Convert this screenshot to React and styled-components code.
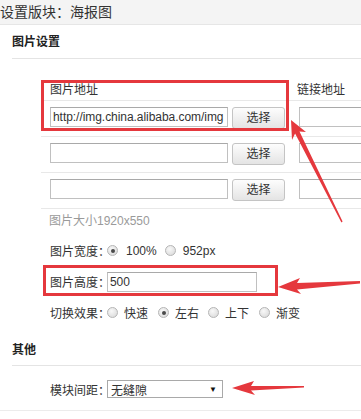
import React from 'react';
import styled, { createGlobalStyle } from 'styled-components';

const GlobalStyle = createGlobalStyle`
  html, body {
    margin: 0;
    padding: 0;
    background: #fff;
  }
  body {
    font-family: "Liberation Sans", "Noto Sans CJK SC", sans-serif;
    font-size: 12px;
    color: #333;
  }
`;

const Page = styled.div`
  position: relative;
  width: 361px;
  height: 419px;
  overflow: hidden;
  background: #fff;
`;

const Header = styled.div`
  height: 24px;
  line-height: 24px;
  background: #f4f4f4;
  border-bottom: 1px solid #e6e6e6;
  font-size: 14px;
  color: #333;
  white-space: nowrap;
`;

const SectionTitle = styled.div`
  margin-left: 12px;
  padding: ${({ $top }) => $top}px 0 ${({ $bottom }) => $bottom}px;
  line-height: 14px;
  font-size: 12px;
  font-weight: bold;
  color: #222;
  border-bottom: 1px solid #e4e4e4;
`;

const Table = styled.div`
  margin: 21px 0 0 41px;
  width: 420px;
`;

const HeadRow = styled.div`
  display: flex;
  height: 20px;
  line-height: 20px;
  padding-left: 9px;
  border-bottom: 1px solid #e8e8e8;
  white-space: nowrap;
`;

const HeadCell = styled.div`
  flex-shrink: 0;
  width: ${({ $w }) => ($w ? `${$w}px` : 'auto')};
`;

const Row = styled.div`
  display: flex;
  align-items: flex-start;
  padding: 6px 0 7px 9px;
  border-bottom: 1px solid #e8e8e8;
`;

const TextInput = styled.input`
  box-sizing: border-box;
  flex-shrink: 0;
  width: ${({ $w }) => $w}px;
  height: 20px;
  margin: 0;
  padding: 0 0 0 2px;
  border: 1px solid #c0c0c0;
  border-top-color: #a9a9a9;
  border-radius: 0;
  background: #fff;
  font-family: "Liberation Sans", "Noto Sans CJK SC", sans-serif;
  font-size: 12px;
  letter-spacing: -0.05px;
  color: #333;
  outline: none;
`;

const PickButton = styled.button`
  box-sizing: border-box;
  flex-shrink: 0;
  width: 53px;
  height: 22px;
  margin: 0 14px 0 4px;
  padding: 0;
  border: 1px solid #c4c4c4;
  border-radius: 3px;
  background: linear-gradient(#fdfdfd, #e4e4e4);
  font-family: "Liberation Sans", "Noto Sans CJK SC", sans-serif;
  font-size: 12px;
  color: #333;
  line-height: 20px;
`;

const Note = styled.div`
  margin: 4px 0 0 49px;
  line-height: 16px;
  color: #9a9a9a;
`;

const FormList = styled.div`
  margin: 6px 0 0 50px;
`;

const FormRow = styled.div`
  display: flex;
  align-items: center;
  height: 31px;
  white-space: nowrap;
`;

const Label = styled.span`
  flex-shrink: 0;
  width: 57px;
  color: #333;
`;

const Option = styled.span`
  display: inline-flex;
  align-items: center;
  margin-right: ${({ $gap }) => $gap}px;
  color: #333;
`;

const Radio = styled.span`
  box-sizing: border-box;
  display: inline-flex;
  align-items: center;
  justify-content: center;
  width: 11px;
  height: 11px;
  margin-right: ${({ $gap }) => $gap}px;
  border: 1px solid #b5b5b5;
  border-radius: 50%;
  background: radial-gradient(circle at 40% 35%, #f8f8f8, #d6d6d6);

  &::after {
    content: '';
    width: 4px;
    height: 4px;
    border-radius: 50%;
    background: ${({ $checked }) => ($checked ? '#4a4a4a' : 'transparent')};
  }
`;

const Select = styled.div`
  box-sizing: border-box;
  display: flex;
  align-items: center;
  justify-content: space-between;
  width: 116px;
  height: 18px;
  padding: 0 5px 0 3px;
  border: 1px solid #a9a9a9;
  background: #fff;
  color: #333;
`;

const Caret = styled.span`
  font-size: 8px;
  color: #111;
`;

const OtherBody = styled.div`
  padding: 14px 0 12px 50px;
  border-bottom: 1px solid #ececec;
`;

const SelectRow = styled.div`
  display: flex;
  align-items: center;
  white-space: nowrap;
`;

const Highlight = styled.div`
  position: absolute;
  box-sizing: border-box;
  left: ${({ $x }) => $x}px;
  top: ${({ $y }) => $y}px;
  width: ${({ $w }) => $w}px;
  height: ${({ $h }) => $h}px;
  border: 3px solid #e5383d;
  pointer-events: none;
`;

const Arrows = styled.svg`
  position: absolute;
  left: 0;
  top: 0;
  pointer-events: none;
`;

const rows = [
  'http://img.china.alibaba.com/img',
  '',
  '',
];

export default function App() {
  return (
    <Page>
      <GlobalStyle />
      <Header>设置版块：海报图</Header>

      <SectionTitle $top={10} $bottom={9}>图片设置</SectionTitle>

      <Table>
        <HeadRow>
          <HeadCell $w={247}>图片地址</HeadCell>
          <HeadCell>链接地址</HeadCell>
        </HeadRow>
        {rows.map((value, i) => (
          <Row key={i}>
            <TextInput $w={178} defaultValue={value} readOnly />
            <PickButton type="button">选择</PickButton>
            <TextInput $w={150} defaultValue="" readOnly />
          </Row>
        ))}
      </Table>

      <Note>图片大小1920x550</Note>

      <FormList>
        <FormRow>
          <Label>图片宽度：</Label>
          <Radio $checked $gap={8} />
          <Option $gap={8}>100%</Option>
          <Radio $gap={7} />
          <Option $gap={0}>952px</Option>
        </FormRow>
        <FormRow>
          <Label>图片高度：</Label>
          <TextInput $w={150} defaultValue="500" readOnly />
        </FormRow>
        <FormRow>
          <Label>切换效果：</Label>
          <Radio $gap={6} />
          <Option $gap={10}>快速</Option>
          <Radio $checked $gap={6} />
          <Option $gap={9}>左右</Option>
          <Radio $gap={6} />
          <Option $gap={10}>上下</Option>
          <Radio $gap={6} />
          <Option $gap={0}>渐变</Option>
        </FormRow>
      </FormList>

      <SectionTitle $top={15} $bottom={8}>其他</SectionTitle>

      <OtherBody>
        <SelectRow>
          <Label>模块间距：</Label>
          <Select>
            <span>无缝隙</span>
            <Caret>▼</Caret>
          </Select>
        </SelectRow>
      </OtherBody>

      <Highlight $x={41} $y={80} $w={248} $h={51} />
      <Highlight $x={43} $y={265} $w={235} $h={31} />

      <Arrows width="361" height="419" viewBox="0 0 361 419">
        <polygon
          fill="#e5383d"
          points="291,120 306,132 299.5,131.4 342.6,221.6 341.4,222.4 295.1,133.6 292,140"
        />
        <polygon
          fill="#e5383d"
          points="278,287 300,278 297,283 360,281 360,283.5 297,289.5 301,294"
        />
        <polygon
          fill="#e5383d"
          points="232,388 254,381 251,386 304,386 304,387.6 251,390.5 255,395"
        />
      </Arrows>
    </Page>
  );
}
